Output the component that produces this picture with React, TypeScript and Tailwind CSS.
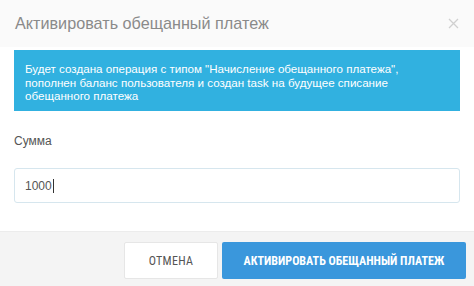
export default function App() {
  return (
    <div className="flex h-[286px] w-[474px] flex-col bg-white font-['Liberation_Sans',Arial,sans-serif]">
      <header className="flex h-[47px] shrink-0 items-center justify-between bg-[#fafafa] pl-[15px] pr-[15px]">
        <h1 className="text-[16.2px] leading-none text-[#8a8a8a]">Активировать обещанный платеж</h1>
        <button type="button" aria-label="Закрыть" className="flex h-[12px] w-[12px] items-center justify-center">
          <svg width="11" height="11" viewBox="0 0 11 11" fill="none" stroke="#d0d0d0" strokeWidth="1.3">
            <path d="M1 1L10 10M10 1L1 10" />
          </svg>
        </button>
      </header>

      <div className="px-[14px] pt-[3px]">
        <div className="h-[61px] bg-[#31b1e0] px-[11px] pt-[12px] text-[11.6px] leading-[13.5px] text-white">
          Будет создана операция с типом "Начисление обещанного платежа",
          <br />
          пополнен баланс пользователя и создан task на будущее списание
          <br />
          обещанного платежа
        </div>

        <label className="mt-[22px] block text-[12px] leading-[16px] text-[#555]">Сумма</label>
        <div className="mt-[19px] flex h-[35px] items-center rounded-[3px] border border-[#d6e6ee] px-[10px] text-[12px] text-[#555]">
          1000<span className="ml-px h-[14px] w-px bg-[#333]" />
        </div>
      </div>

      <footer className="mt-auto flex h-[55px] shrink-0 justify-end gap-[4px] border-t border-[#ececec] bg-[#f4f4f4] pr-[8px] pt-[10px]">
        <button
          type="button"
          className="h-[37px] w-[94px] rounded-[2px] border border-[#e6e6e6] bg-white font-['Roboto_Condensed','Liberation_Sans_Narrow','DejaVu_Sans_Condensed',sans-serif] text-[12px] uppercase tracking-[0.3px] text-[#555]"
        >
          Отмена
        </button>
        <button
          type="button"
          className="h-[37px] w-[244px] rounded-[2px] bg-[#3a97dc] font-['Roboto_Condensed','Liberation_Sans_Narrow','DejaVu_Sans_Condensed',sans-serif] text-[12px] font-bold uppercase text-white"
        >
          Активировать обещанный платеж
        </button>
      </footer>
    </div>
  );
}
